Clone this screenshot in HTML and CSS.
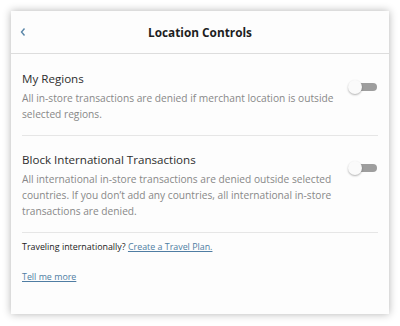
FILE: index.html
```html
<!DOCTYPE html>
<html lang="en">
<head>
    <meta charset="UTF-8">
    <meta name="viewport" content="width=device-width, initial-scale=1.0">
    <title>Location Controls</title>
    <link rel="stylesheet" href="styles.css">
</head>

<body>
    <div class="panel">
        <header class="panel-header">
            <a href="#" class="back">
                <svg width="8" height="10" viewBox="0 0 8 10"><path d="M5.5 1.5 L2.5 5 L5.5 8.5" fill="none" stroke="#5a86a8" stroke-width="1.4"/></svg>
            </a>
            <h1>Location Controls</h1>
        </header>

        <div class="panel-body">
            <div class="setting">
                <div class="setting-text">
                    <h2>My Regions</h2>
                    <p>All in-store transactions are denied if merchant location is outside selected regions.</p>
                </div>
                <span class="toggle"><span class="knob"></span></span>
            </div>

            <div class="setting">
                <div class="setting-text">
                    <h2>Block International Transactions</h2>
                    <p>All international in-store transactions are denied outside selected countries. If you don’t add any countries, all international in-store transactions are denied.</p>
                </div>
                <span class="toggle"><span class="knob"></span></span>
            </div>

            <p class="travel">Traveling internationally? <a href="#">Create a Travel Plan.</a></p>
            <p class="more"><a href="#">Tell me more</a></p>
        </div>
    </div>
</body>
</html>
```

FILE: styles.css
```css
body {
    font-family: "Open Sans", Arial, sans-serif;
    background-color: #ffffff;
    color: #333333;
    margin: 0;
    padding: 11px;
}

.panel {
    width: 378px;
    height: 303px;
    background: #fdfdfd;
    box-shadow: 0 0 8px rgba(0, 0, 0, 0.3);
    display: flex;
    flex-direction: column;
}

.panel-header {
    height: 42px;
    border-bottom: 1px solid #dddddd;
    display: flex;
    align-items: center;
    justify-content: center;
    position: relative;
}

.panel-header h1 {
    margin: 0;
    font-size: 11.8px;
    font-weight: bold;
    color: #1e1e1e;
}

.back {
    position: absolute;
    left: 8px;
    top: 16px;
    display: flex;
}

.panel-body {
    padding: 0 11px;
}

.setting {
    display: flex;
    justify-content: space-between;
    padding: 15px 0 13px;
    border-bottom: 1px solid #e6e6e6;
}

.setting + .setting {
    padding-top: 14px;
}

.setting h2 {
    margin: 0;
    font-size: 11.6px;
    font-weight: normal;
    line-height: 20px;
    color: #2e2e2e;
}

.setting p {
    margin: 1px 0 0;
    font-size: 10.2px;
    line-height: 16px;
    color: #888888;
    max-width: 320px;
}

.toggle {
    position: relative;
    flex: none;
    width: 30px;
    height: 14px;
    margin-top: 11px;
}

.toggle::before {
    content: "";
    position: absolute;
    left: 9px;
    top: 3px;
    width: 20px;
    height: 8px;
    border-radius: 4px;
    background: #9e9e9e;
}

.knob {
    position: absolute;
    left: 0;
    top: 0;
    width: 14px;
    height: 14px;
    border-radius: 50%;
    background: #fafafa;
    box-shadow: 0 1px 2px rgba(0, 0, 0, 0.3);
}

.travel {
    margin: 6px 0 0;
    font-size: 8.9px;
    line-height: 16px;
    color: #222222;
}

.more {
    margin: 14px 0 0;
    font-size: 8.9px;
    line-height: 16px;
}

a {
    color: #4f7da3;
}
```
